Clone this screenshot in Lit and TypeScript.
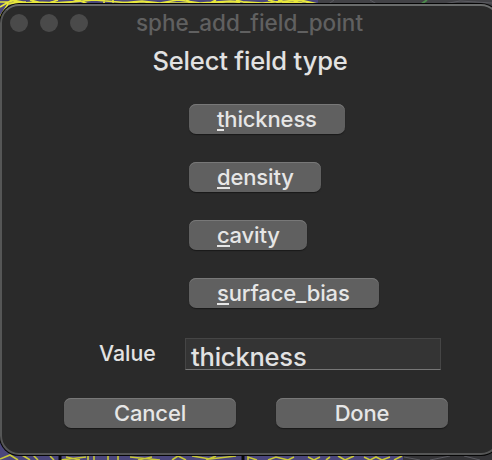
import { LitElement, html, svg, css } from "lit";
import { customElement } from "lit/decorators.js";

const FIELD_TYPES = ["thickness", "density", "cavity", "surface_bias"];

/* Wireframe of the 3D viewport that shows around the dialog */
const TOP_MESH =
  "M0 17L8 4L36 2L62 3L94 0L130 3M0 7L12 0L28 3M0 2H26M30 0L46 4L58 0M50 3L84 1M66 4L78 0L88 4M104 4V0M113 0V5M120 3L142 1L160 3L178 0L200 3L230 1L262 3L300 0L318 4M186 0L196 4M208 4L216 0M236 0L250 4M268 0L284 4M278 0L292 4M290 0L306 4M298 0L314 4M130 3H240M282 2L300 3";
const BOTTOM_MESH =
  "M0 459L10 455L18 460M22 455L30 460M33 455L38 460M50 456L54 460M60 460L86 457M66 457L80 460M88 456V460M94 456V460M108 456V460M118 456V460M130 457L160 460M138 460L152 457M172 460L178 456L186 460M192 456L210 459L236 456M216 456L206 460M248 460V457L257 460M268 460L276 457L288 460L294 457M308 457L314 460L320 457M326 460L330 457M338 456L345 460L354 456M364 457L370 460L376 457L382 460L390 457M394 460L402 456";

@customElement("app-root")
export class AppRoot extends LitElement {
  static styles = css`
    :host {
      display: block;
      position: relative;
      width: 492px;
      height: 460px;
      overflow: hidden;
      background: #343437;
      font-family: Inter, "Liberation Sans", sans-serif;
      font-weight: 500;
      color: #e2e2e2;
    }
    .viewport {
      position: absolute;
      inset: 0;
    }
    .window {
      position: relative;
      box-sizing: border-box;
      width: 500px;
      height: 451px;
      margin-top: 4px;
      border: 2px solid #555656;
      border-top-color: #6a6c6c;
      border-radius: 19px;
      background: #2a2a2a;
      box-shadow: 0 0 0 1px #060606;
    }
    .titlebar {
      display: flex;
      align-items: center;
      height: 34px;
      padding-left: 8px;
    }
    .dot {
      width: 18px;
      height: 18px;
      margin-right: 12px;
      border-radius: 50%;
      background: #4a4a4a;
    }
    .title {
      margin-left: 36px;
      font-size: 22.5px;
      line-height: 30px;
      color: #606060;
      white-space: nowrap;
    }
    .heading {
      width: 496px;
      height: 40px;
      text-align: center;
      font-size: 25.5px;
      letter-spacing: -0.15px;
      line-height: 42px;
      white-space: nowrap;
    }
    .types {
      display: flex;
      flex-direction: column;
      align-items: flex-start;
      gap: 28px;
      margin: 24px 0 0 187px;
    }
    button {
      display: block;
      box-sizing: border-box;
      height: 30px;
      margin: 0;
      padding: 0;
      border: 0;
      border-radius: 7px;
      background: #606060;
      box-shadow: inset 0 1px 0 #787878, 0 1px 1px #191919;
      font: 500 22px/30px Inter, "Liberation Sans", sans-serif;
      letter-spacing: -0.15px;
      color: #e6e6e6;
      white-space: nowrap;
    }
    .type {
      text-align: left;
      padding-left: 28px;
    }
    .key {
      display: inline-block;
      height: 27px;
      box-sizing: border-box;
      border-bottom: 2px solid #e6e6e6;
      vertical-align: top;
    }
    .thickness { width: 156px; }
    .density { width: 132px; }
    .cavity { width: 118px; }
    .surface_bias { width: 190px; }
    .value-row {
      display: flex;
      margin: 30px 0 0 97px;
    }
    .label {
      width: 86px;
      font-size: 21.3px;
      line-height: 30px;
    }
    .entry {
      box-sizing: border-box;
      width: 256px;
      height: 32px;
      padding-left: 5px;
      border: 1px solid #454545;
      border-bottom-color: #777;
      background: #343434;
      font-size: 25.5px;
      letter-spacing: -0.2px;
      line-height: 36px;
    }
    .actions {
      display: flex;
      gap: 40px;
      margin: 28px 0 0 62px;
    }
    .action {
      width: 172px;
      text-align: center;
    }
  `;

  render() {
    return html`
      <svg class="viewport" width="492" height="460" viewBox="0 0 492 460">
        ${svg`
          <path d="M0 0H318V30H0ZM0 430H403V460H0Z" fill="#4b477c" />
          <path d="M318 0H492V6H318Z" fill="#424246" />
          <path d="M326 6L334 0M370 0L380 6M438 5L460 1L492 3M404 457L420 460M430 460L450 456M464 456L480 460" stroke="#5b5b61" fill="none" />
          <path d="M420 5L427 0" stroke="#4c8b4c" stroke-width="2" />
          <path d=${TOP_MESH} stroke="#e8e83c" stroke-width="1.7" fill="none" />
          <path d=${BOTTOM_MESH} stroke="#c9c937" stroke-width="1.6" fill="none" />
          <path d="M60 456V460M243 456V460" stroke="#080808" stroke-width="3" />`}
      </svg>
      <div class="window">
        <div class="titlebar">
          <span class="dot"></span><span class="dot"></span><span class="dot"></span>
          <span class="title">sphe_add_field_point</span>
        </div>
        <div class="heading">Select field type</div>
        <div class="types">
          ${FIELD_TYPES.map(
            (t) => html`<button class="type ${t}"><span class="key">${t[0]}</span>${t.slice(1)}</button>`
          )}
        </div>
        <div class="value-row">
          <span class="label">Value</span>
          <div class="entry">thickness</div>
        </div>
        <div class="actions">
          <button class="action">Cancel</button>
          <button class="action">Done</button>
        </div>
      </div>
    `;
  }
}
